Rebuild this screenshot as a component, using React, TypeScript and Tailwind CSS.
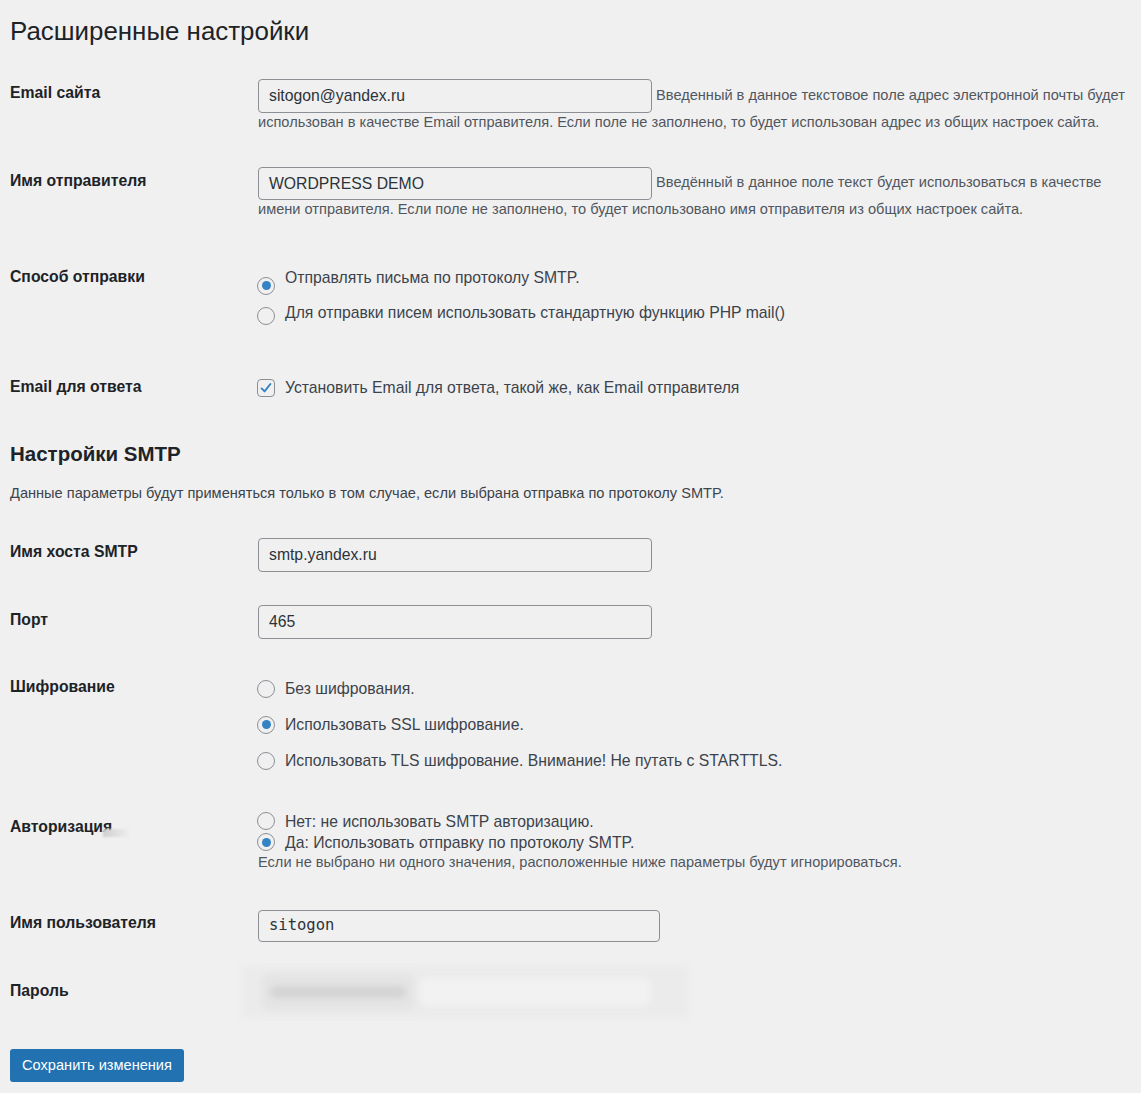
import React from "react";

const font = { fontFamily: '"Liberation Sans", Arial, sans-serif' };

function Radio({ checked }: { checked?: boolean }) {
  return (
    <span className="inline-flex h-[18px] w-[18px] shrink-0 items-center justify-center rounded-full border border-[#8c8f94] bg-transparent">
      {checked && <span className="h-[9px] w-[9px] rounded-full bg-[#3582c4]" />}
    </span>
  );
}

function Checkbox() {
  return (
    <span className="inline-flex h-[18px] w-[18px] shrink-0 items-center justify-center rounded-[4px] border border-[#8c8f94]">
      <svg width="16" height="16" viewBox="0 0 20 20">
        <path d="M4.5 10.5 L8.2 14.2 L15.5 5" fill="none" stroke="#3582c4" strokeWidth="2.4" strokeLinecap="round" strokeLinejoin="round" />
      </svg>
    </span>
  );
}

function Label({ children, className }: { children: React.ReactNode; className: string }) {
  return (
    <div className={"w-[248px] shrink-0 text-[15.75px] font-bold leading-[20px] text-[#1d2327] " + className}>
      {children}
    </div>
  );
}

function TextInput({ value, className }: { value: string; className: string }) {
  return (
    <span
      className={
        "inline-flex items-center rounded-[4px] border border-[#8c8f94] bg-transparent px-[10px] align-middle text-[15.75px] text-[#2c3338] " +
        className
      }
    >
      {value}
    </span>
  );
}

export default function App() {
  return (
    <div className="min-h-[1093px] w-full bg-[#f0f0f1] pl-[10px]" style={font}>
      {/* Title */}
      <h1 className="pt-[16px] text-[25.9px] font-normal leading-[30px] text-[#1d2327]">Расширенные настройки</h1>

      {/* Email сайта */}
      <div className="mt-[18px] flex h-[88px]">
        <Label className="pt-[19px]">Email сайта</Label>
        <div className="pt-[15px] text-[14.6px] leading-[18px] text-[#50575e]">
          <TextInput value="sitogon@yandex.ru" className="h-[34px] w-[394px]" /> Введенный в данное текстовое поле адрес
          электронной почты будет
          <br />
          использован в качестве Email отправителя. Если поле не заполнено, то будет использован адрес из общих настроек
          сайта.
        </div>
      </div>

      {/* Имя отправителя */}
      <div className="flex h-[96px]">
        <Label className="pt-[19px]">Имя отправителя</Label>
        <div className="pt-[15px] text-[14.6px] leading-[18px] text-[#50575e]">
          <TextInput value="WORDPRESS DEMO" className="h-[33px] w-[394px]" /> Введённый в данное поле текст будет
          использоваться в качестве
          <br />
          имени отправителя. Если поле не заполнено, то будет использовано имя отправителя из общих настроек сайта.
        </div>
      </div>

      {/* Способ отправки */}
      <div className="flex h-[110px]">
        <Label className="pt-[19px]">Способ отправки</Label>
        <div className="flex flex-col gap-[13px] pt-[19px] text-[15.75px] leading-[22px] text-[#3c434a]">
          <div className="-ml-[1px] flex h-[22px] items-start gap-[10px]">
            <span className="mt-[7px]">
              <Radio checked />
            </span>
            <span>Отправлять письма по протоколу SMTP.</span>
          </div>
          <div className="-ml-[1px] flex h-[22px] items-start gap-[10px]">
            <span className="mt-[5px]">
              <Radio />
            </span>
            <span>Для отправки писем использовать стандартную функцию PHP mail()</span>
          </div>
        </div>
      </div>

      {/* Email для ответа */}
      <div className="flex h-[68px]">
        <Label className="pt-[19px]">Email для ответа</Label>
        <div className="pt-[19px] text-[15.75px] leading-[22px] text-[#3c434a]">
          <div className="-ml-[1px] flex items-center gap-[10px]">
            <Checkbox />
            <span>Установить Email для ответа, такой же, как Email отправителя</span>
          </div>
        </div>
      </div>

      {/* Настройки SMTP */}
      <h2 className="mt-[16px] text-[20.5px] font-bold leading-[24px] text-[#1d2327]">Настройки SMTP</h2>
      <p className="mt-[18px] text-[14.6px] leading-[19.5px] text-[#3c434a]">
        Данные параметры будут применяться только в том случае, если выбрана отправка по протоколу SMTP.
      </p>

      {/* Имя хоста */}
      <div className="mt-[19px] flex h-[68px]">
        <Label className="pt-[19px]">Имя хоста SMTP</Label>
        <div className="pt-[15px]">
          <TextInput value="smtp.yandex.ru" className="h-[34px] w-[394px]" />
        </div>
      </div>

      {/* Порт */}
      <div className="flex h-[67px]">
        <Label className="pt-[19px]">Порт</Label>
        <div className="pt-[14px]">
          <TextInput value="465" className="h-[34px] w-[394px]" />
        </div>
      </div>

      {/* Шифрование */}
      <div className="flex h-[140px]">
        <Label className="pt-[19px]">Шифрование</Label>
        <div className="flex flex-col gap-[14px] pt-[20px] text-[15.75px] leading-[22px] text-[#3c434a]">
          <div className="-ml-[1px] flex items-center gap-[10px]">
            <Radio />
            <span>Без шифрования.</span>
          </div>
          <div className="-ml-[1px] flex items-center gap-[10px]">
            <Radio checked />
            <span>Использовать SSL шифрование.</span>
          </div>
          <div className="-ml-[1px] flex items-center gap-[10px]">
            <Radio />
            <span>Использовать TLS шифрование. Внимание! Не путать с STARTTLS.</span>
          </div>
        </div>
      </div>

      {/* Авторизация */}
      <div className="flex h-[96px]">
        <Label className="pt-[19px]">
          <span className="relative">
            Авторизация
            <span className="absolute left-[93px] top-[11px] h-[8px] w-[26px] bg-gradient-to-r from-[#cfcfcf] to-[#eeeeee] blur-[1px]" />
          </span>
        </Label>
        <div className="pt-[13px] text-[15.75px] leading-[21px] text-[#3c434a]">
          <div className="-ml-[1px] flex items-center gap-[10px]">
            <Radio />
            <span>Нет: не использовать SMTP авторизацию.</span>
          </div>
          <div className="-ml-[1px] flex items-center gap-[10px]">
            <Radio checked />
            <span>Да: Использовать отправку по протоколу SMTP.</span>
          </div>
          <div className="text-[14.6px] leading-[19px] text-[#50575e]">
            Если не выбрано ни одного значения, расположенные ниже параметры будут игнорироваться.
          </div>
        </div>
      </div>

      {/* Имя пользователя */}
      <div className="flex h-[68px]">
        <Label className="pt-[19px]">Имя пользователя</Label>
        <div className="pt-[16px]">
          <span
            className="inline-flex h-[32px] w-[402px] items-center rounded-[4px] border border-[#8c8f94] px-[10px] text-[15.5px] text-[#2c3338]"
            style={{ fontFamily: '"DejaVu Sans Mono", "Liberation Mono", monospace' }}
          >
            sitogon
          </span>
        </div>
      </div>

      {/* Пароль */}
      <div className="flex h-[87px]">
        <Label className="pt-[19px]">Пароль</Label>
        <div className="-ml-[16px] pt-[4px]">
          <div className="flex h-[52px] w-[446px] items-center gap-[6px] bg-[#ebebeb] px-[20px] blur-[3px]">
            <div className="flex h-[36px] w-[152px] items-center rounded-[6px] bg-[#e4e4e4] px-[8px]">
              <div className="h-[12px] w-[138px] rounded-full bg-[#d4d4d4]" />
            </div>
            <div className="h-[28px] w-[230px] rounded-[8px] bg-[#f2f2f2]" />
          </div>
        </div>
      </div>

      {/* Button */}
      <button className="h-[33px] w-[174px] rounded-[3px] bg-[#2271b1] text-[14.6px] leading-[33px] text-white">
        Сохранить изменения
      </button>
    </div>
  );
}
